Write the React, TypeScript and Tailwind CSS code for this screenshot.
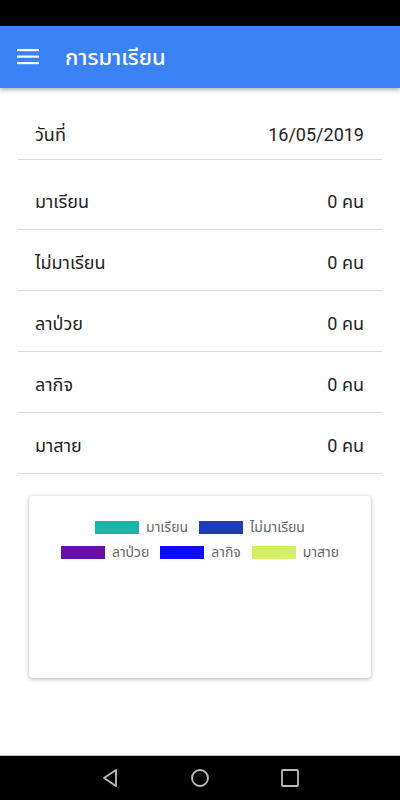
import type { ReactNode } from "react";

const FONT = { fontFamily: "Roboto, 'Noto Sans', 'Noto Sans Thai', 'DejaVu Sans', sans-serif" };

const ROWS = [
  { label: "มาเรียน", count: 0 },
  { label: "ไม่มาเรียน", count: 0 },
  { label: "ลาป่วย", count: 0 },
  { label: "ลากิจ", count: 0 },
  { label: "มาสาย", count: 0 },
];

const LEGEND = [
  [
    { label: "มาเรียน", color: "bg-[#1ab5a8]" },
    { label: "ไม่มาเรียน", color: "bg-[#1d3db8]" },
  ],
  [
    { label: "ลาป่วย", color: "bg-[#660fab]" },
    { label: "ลากิจ", color: "bg-[#0a0aff]" },
    { label: "มาสาย", color: "bg-[#d3ef62]" },
  ],
];

function NavButton({ children }: { children: ReactNode }) {
  return <div className="w-[40px] h-[40px] grid place-items-center">{children}</div>;
}

export default function App() {
  return (
    <div className="w-[400px] h-[800px] flex flex-col bg-white overflow-hidden" style={FONT}>
      {/* status bar */}
      <div className="h-[26px] bg-black shrink-0" />

      {/* app bar */}
      <header className="relative z-10 h-[62px] shrink-0 bg-[#3b82f6] flex items-center shadow-[0_2px_4px_rgba(0,0,0,0.3)]">
        <div className="w-[65px] flex justify-start pl-[17px]">
          <svg width="22" height="16" viewBox="0 0 22 16" aria-hidden="true">
            <rect x="0" y="0" width="22" height="2.2" fill="#fff" />
            <rect x="0" y="6.5" width="22" height="2.2" fill="#fff" />
            <rect x="0" y="13" width="22" height="2.2" fill="#fff" />
          </svg>
        </div>
        <h1 className="text-white text-[22px] font-medium leading-none pt-[2px]">การมาเรียน</h1>
      </header>

      <main className="flex-1 min-h-0">
        <div className="mx-[18px] mt-[16px]">
          <div className="h-[56px] flex items-center justify-between pl-[17px] pr-[18px] pt-[6px] border-b border-[#d9d9d9] text-[18px] text-[#222]">
            <span>วันที่</span>
            <span>16/05/2019</span>
          </div>

          <ul className="mt-[9px]">
            {ROWS.map((row) => (
              <li
                key={row.label}
                className="h-[61px] flex items-center justify-between pl-[17px] pr-[18px] pt-[4px] border-b border-[#d9d9d9] text-[18px] text-[#222]"
              >
                <span>{row.label}</span>
                <span>{row.count} คน</span>
              </li>
            ))}
          </ul>
        </div>

        <section className="mx-[29px] mt-[22px] h-[182px] rounded-[4px] bg-white shadow-[0_1px_4px_rgba(0,0,0,0.3)] pt-[24px]">
          <div className="flex flex-col items-center gap-[11px]">
            {LEGEND.map((line, i) => (
              <div key={i} className="flex items-center gap-[11px]">
                {line.map((item) => (
                  <div key={item.label} className="flex items-center gap-[7px]">
                    <span className={`w-[44px] h-[13px] ${item.color}`} />
                    <span className="text-[14px] leading-none text-[#666]">{item.label}</span>
                  </div>
                ))}
              </div>
            ))}
          </div>
        </section>
      </main>

      {/* android nav bar */}
      <footer className="h-[45px] shrink-0 bg-black border-t border-[#bdbdbd] flex items-center justify-center gap-[50px]">
        <NavButton>
          <svg width="18" height="20" viewBox="0 0 18 20" aria-hidden="true">
            <path d="M15 2 L3 10 L15 18 Z" fill="none" stroke="#bdbdbd" strokeWidth="1.8" strokeLinejoin="round" />
          </svg>
        </NavButton>
        <NavButton>
          <svg width="20" height="20" viewBox="0 0 20 20" aria-hidden="true">
            <circle cx="10" cy="10" r="8" fill="none" stroke="#bdbdbd" strokeWidth="1.8" />
          </svg>
        </NavButton>
        <NavButton>
          <svg width="20" height="20" viewBox="0 0 20 20" aria-hidden="true">
            <rect x="2" y="2" width="16" height="16" rx="1" fill="none" stroke="#bdbdbd" strokeWidth="1.8" />
          </svg>
        </NavButton>
      </footer>
    </div>
  );
}
